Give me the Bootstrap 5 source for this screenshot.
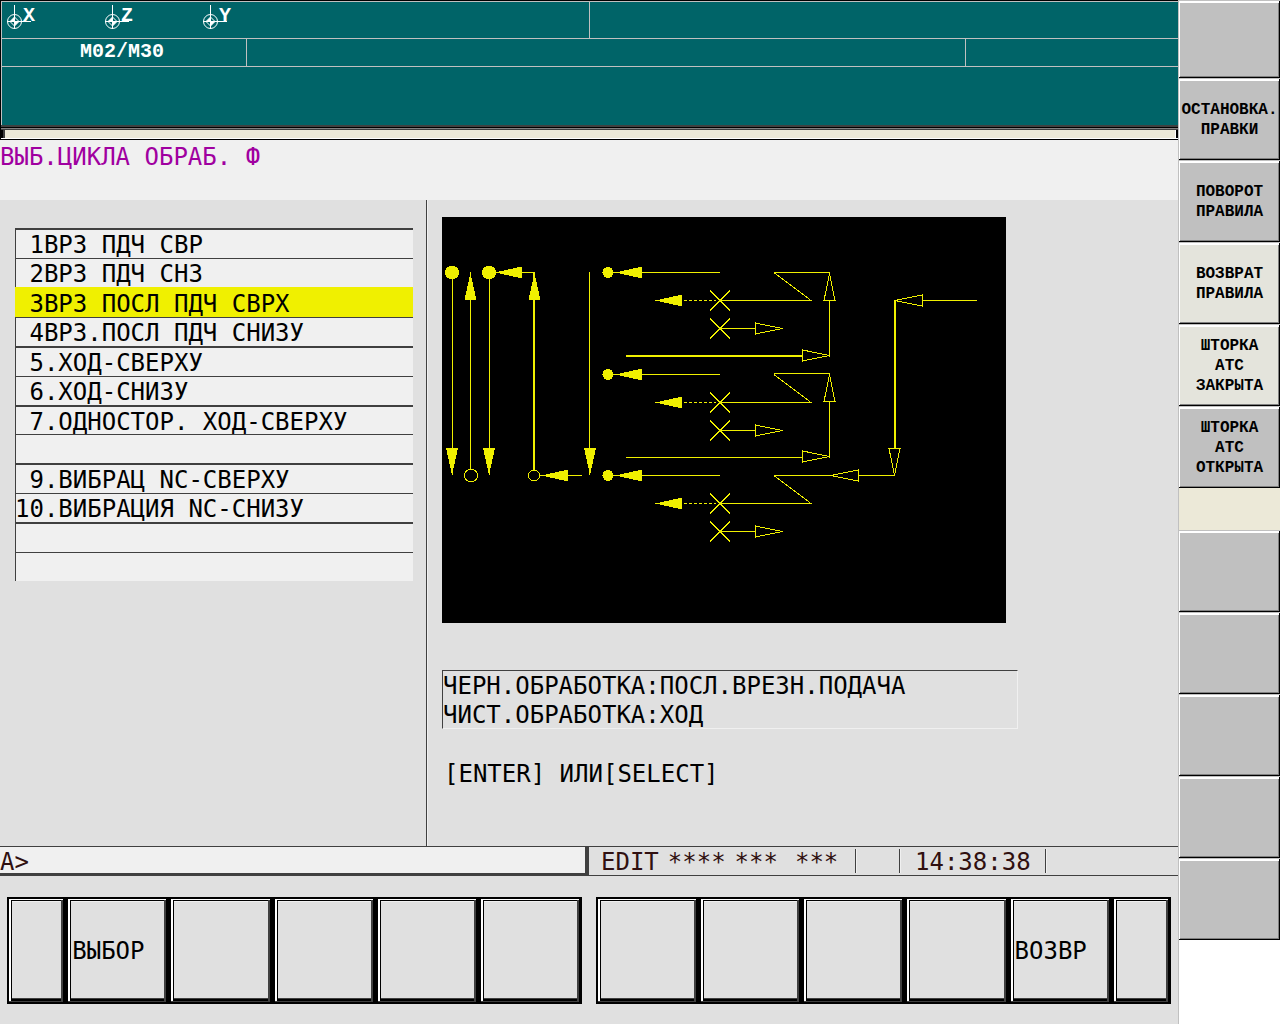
<!DOCTYPE html>
<html lang="ru">
<head>
<meta charset="utf-8">
<meta name="viewport" content="width=device-width, initial-scale=1">
<title>ВЫБ.ЦИКЛА ОБРАБ.</title>
<link href="https://cdn.jsdelivr.net/npm/bootstrap@5.3.0/dist/css/bootstrap.min.css" rel="stylesheet">
<style>
  body { background: #fff; color: #000; font-family: "DejaVu Sans Mono", monospace; font-size: 24px; line-height: 29px; }
  .cnc-main { background: #e0e0e0; min-width: 0; }
  .cnc-text { white-space: pre; }

  /* status header */
  .cnc-head { background: #006468; border-top: 1px solid #000; border-left: 1px solid #000; color: #fff; font-family: "Liberation Mono", monospace; font-weight: 700; font-size: 20px; line-height: 26px; }
  .head-in { border-top: 1px solid #c0c0c0; border-left: 1px solid #c0c0c0; }
  .head-line { border-bottom: 1px solid #c0c0c0; }
  .head-axes { height: 37px; }
  .head-mode { height: 28px; }
  .head-free { height: 58px; }
  .head-sep { border-right: 1px solid #c0c0c0; }
  .axis-group { padding: 3px 0 0 5px; line-height: 22px; }
  .axis-item { width: 98px; }
  .axis-name { margin-left: -8px; }
  .head-bar { height: 15px; background: #ece9d8; border-top: 2px solid #404040; border-bottom: 1px solid #000; padding-left: 1px; box-shadow: inset 0 1px #000, inset 0 2px #808080, inset 0 3px #404040, inset 0 -1px #fff, inset 2px 0 #000, inset 4px 0 #404040, inset -2px 0 #000, inset -3px 0 #fff; }

  .cnc-title { background: #f0f0f0; color: #a000a0; height: 60px; font-size: 24px; line-height: 34px; }

  /* work area */
  .cnc-work { height: 646px; }
  .cycle-col { width: 427px; padding: 28px 13px 0 15px; border-right: 1px solid #404040; box-shadow: 1px 0 #f0f0f0; }
  .cycle-list { height: 353px; }
  .cycle-row { flex: 1 1 0; display: flex; align-items: center; border: 0; border-top: 1px solid #404040; padding: 2px 0 0; background: #f0f0f0; color: #000; white-space: pre; text-align: left; line-height: 26px; box-shadow: inset 1px 0 #404040; min-height: 0; }
  .cycle-row:nth-child(odd) { border-top-width: 2px; }
  .cycle-row.picked { background: #f0f000; border-top-color: #f0f000; box-shadow: none; }
  .view-col { padding: 17px 15px 0 15px; }
  .cycle-view { display: block; background: #000; }
  .note-box { width: 576px; margin-top: 47px; padding-top: 1px; border: 1px solid #f0f0f0; border-top-color: #404040; border-left-color: #404040; height: 59px; }
  .hint-line { margin: 31px 0 0 2px; }

  /* prompt and state line */
  .cnc-state { height: 30px; border-top: 1px solid #404040; border-bottom: 1px solid #404040; color: #301010; line-height: 30px; }
  .prompt-box { width: 589px; background: #f0f0f0; border-right: 4px solid #404040; border-bottom: 2px solid #404040; }
  .prompt-box input { background: transparent; border: 0; outline: 0; color: inherit; font: inherit; min-width: 0; padding: 0; height: 26px; }
  .state-mode { width: 266px; padding-left: 12px; gap: 9px; }
  .state-cell { border-left: 1px solid #404040; box-shadow: inset 1px 0 #f0f0f0; margin: 2px 0; line-height: 26px; }
  .state-gap { width: 44px; }
  .state-time { width: 146px; padding-left: 15px; }

  /* soft keys */
  .cnc-keys { padding: 21px 7px 20px; gap: 14px; }
  .soft-key { flex: 103 1 0; min-width: 0; height: 107px; padding: 2px 0 0 4px; text-align: left; border: 2px solid #000; border-right-width: 3px; background: #e0e0e0; color: #000;
    box-shadow: inset 0 -1px #404040, inset 2px 0 #fff, inset 0 1px #fff, inset -2px 0 #404040, inset 0 -3px #000, inset 3px 0 #000, inset 0 2px #000, inset 0 -4px #404040, inset 0 3px #f0f0f0; }
  .soft-key.edge-key { flex-grow: 55; }

  /* side keys */
  .cnc-side { width: 102px; padding-left: 1px; background: #fff; box-shadow: inset 1px 0 #c0c0c0; }
  .side-key { height: 82px; padding: 0; border: 0; border-top: 1px solid #c0c0c0; background: #c0c0c0; color: #000; font-family: "Liberation Mono", monospace; font-weight: 700; font-size: 16px; line-height: 20px; white-space: pre; display: flex; align-items: center; justify-content: center; text-align: center;
    box-shadow: inset 0 -1px #000, inset -1px 0 #000, inset 1px 1px #fff, inset 0 2px #fff, inset -2px -2px #808080; }
  .side-key.first-key { height: 78px; }
  .side-key.lit { background: #e4e4dc; }
  .side-gap { height: 42px; background: #ece9d8; }
</style>
<script src="https://cdn.jsdelivr.net/npm/bootstrap@5.3.0/dist/js/bootstrap.bundle.min.js"></script>
</head>
<body>
<svg width="0" height="0" class="d-none" aria-hidden="true">
  <symbol id="axis-mark" viewBox="0 0 24 24">
    <g fill="none" stroke="#fff"><circle cx="7.500" cy="16.500" r="7"/><path d="M7.500 0V24M0 16.500H24M7.500 12 12 16.500 7.500 21 3 16.500Z"/></g>
    <path d="M7.500 12V16.500H3ZM7.500 21V16.500H12Z" fill="#fff"/>
  </symbol>
</svg>
<div class="d-flex align-items-stretch min-vh-100">
  <main class="cnc-main flex-grow-1 d-flex flex-column">
    <header class="cnc-head">
      <div class="head-in">
        <div class="head-axes head-line d-flex">
          <div class="head-sep axis-group w-50 d-flex">
            <div class="axis-item d-flex"><svg width="24" height="24" aria-hidden="true"><use href="#axis-mark"/></svg><span class="axis-name">X</span></div>
            <div class="axis-item d-flex"><svg width="24" height="24" aria-hidden="true"><use href="#axis-mark"/></svg><span class="axis-name">Z</span></div>
            <div class="axis-item d-flex"><svg width="24" height="24" aria-hidden="true"><use href="#axis-mark"/></svg><span class="axis-name">Y</span></div>
          </div>
        </div>
        <div class="head-mode head-line d-flex text-center">
          <div class="head-sep pe-1" style="width:245px">M02/M30</div>
          <div class="head-sep flex-grow-1"></div>
          <div style="width:212px"></div>
        </div>
        <div class="head-free"></div>
      </div>
      <div class="head-bar"></div>
    </header>
    <h1 class="cnc-title cnc-text m-0 fw-normal">ВЫБ.ЦИКЛА ОБРАБ. Ф</h1>

    <section class="cnc-work d-flex">
      <div class="cycle-col flex-shrink-0">
        <div class="cycle-list d-flex flex-column">
          <button type="button" class="cycle-row"> 1ВРЗ ПДЧ СВР</button>
          <button type="button" class="cycle-row"> 2ВРЗ ПДЧ СНЗ</button>
          <button type="button" class="cycle-row picked"> 3ВРЗ ПОСЛ ПДЧ СВРХ</button>
          <button type="button" class="cycle-row"> 4ВРЗ.ПОСЛ ПДЧ СНИЗУ</button>
          <button type="button" class="cycle-row"> 5.ХОД-СВЕРХУ</button>
          <button type="button" class="cycle-row"> 6.ХОД-СНИЗУ</button>
          <button type="button" class="cycle-row"> 7.ОДНОСТОР. ХОД-СВЕРХУ</button>
          <button type="button" class="cycle-row" aria-label="8"></button>
          <button type="button" class="cycle-row"> 9.ВИБРАЦ NC-СВЕРХУ</button>
          <button type="button" class="cycle-row">10.ВИБРАЦИЯ NC-СНИЗУ</button>
          <button type="button" class="cycle-row" aria-label="11"></button>
          <button type="button" class="cycle-row" aria-label="12"></button>
        </div>
      </div>
      <div class="view-col flex-grow-1">
        <svg class="cycle-view" width="564" height="406" viewBox="442 217 564 406" fill="none" stroke="#f0f000" shape-rendering="crispEdges" role="img" aria-label="Схема цикла">
          <defs>
            <path id="solid-left" d="M0 0 27-6V6Z" fill="#f0f000" stroke="none"/>
            <path id="open-left" d="M0 0 27-5.500V5.500Z"/>
            <path id="cross" d="M-10-10 10 10M-10 10 10-10"/>
            <g id="pass">
              <circle cx="608" cy="0" r="5.500" fill="#f0f000" stroke="none"/>
              <path d="M608 0H720M720 28H811L774 0M720 55.500H756"/>
              <use href="#solid-left" x="615"/>
              <use href="#solid-left" x="655" y="28"/>
              <path d="M684 28H716" stroke-dasharray="3 2"/>
              <use href="#cross" x="720" y="28"/>
              <use href="#cross" x="720" y="56"/>
              <use href="#open-left" transform="translate(782.500 56) rotate(180)"/>
            </g>
            <g id="lift">
              <path d="M626 84H803M829.500 84V28M829.500 0H774"/>
              <use href="#open-left" transform="translate(829.500 83) rotate(180)"/>
              <use href="#open-left" transform="translate(829.500 1) rotate(90)"/>
            </g>
          </defs>
          <path d="M452.500 272V475M470.500 272V470M489.500 272V475M589.500 272V475M489 272.500H534M540 475.500H582"/>
          <path d="M534 272V470" stroke-width="2"/>
          <circle cx="452" cy="272.500" r="7" fill="#f0f000" stroke="none"/>
          <circle cx="489" cy="272.500" r="7" fill="#f0f000" stroke="none"/>
          <circle cx="471" cy="475.500" r="6.500"/>
          <circle cx="534" cy="475.500" r="5.500"/>
          <use href="#solid-left" x="495" y="272.500"/>
          <use href="#solid-left" x="541" y="475.500"/>
          <use href="#solid-left" transform="translate(470.500 273) rotate(90)"/>
          <use href="#solid-left" transform="translate(534.500 273) rotate(90)"/>
          <use href="#solid-left" transform="translate(452 475) rotate(-90)"/>
          <use href="#solid-left" transform="translate(489 475) rotate(-90)"/>
          <use href="#solid-left" transform="translate(590 475) rotate(-90)"/>
          <use href="#pass" y="272.500"/>
          <use href="#pass" y="374.500"/>
          <use href="#pass" y="475.500"/>
          <use href="#lift" y="272.500"/>
          <use href="#lift" y="373.500"/>
          <path d="M626 356H803M895 300V449" stroke-width="2"/>
          <path d="M922 300.500H977M774 475.500H832M858 475.500H895"/>
          <use href="#open-left" x="895" y="300.500"/>
          <use href="#open-left" x="831" y="475.500"/>
          <use href="#open-left" transform="translate(894.500 475.500) rotate(-90)"/>
        </svg>
        <div class="note-box cnc-text">ЧЕРН.ОБРАБОТКА:ПОСЛ.ВРЕЗН.ПОДАЧА
ЧИСТ.ОБРАБОТКА:ХОД</div>
        <div class="hint-line cnc-text">[ENTER] ИЛИ[SELECT]</div>
      </div>
    </section>

    <section class="cnc-state d-flex">
      <div class="prompt-box d-flex flex-shrink-0">
        <label for="prompt">A&gt;</label>
        <input id="prompt" type="text" class="flex-grow-1" autocomplete="off">
      </div>
      <div class="state-mode d-flex"><span>EDIT</span><span>****</span><span>***</span><span class="ms-2">***</span></div>
      <div class="state-cell state-gap"></div>
      <div class="state-cell state-time">14:38:38</div>
      <div class="state-cell flex-grow-1"></div>
    </section>

    <nav class="cnc-keys d-flex">
      <div class="d-flex flex-grow-1 w-50">
        <button type="button" class="soft-key edge-key" aria-label="◄"></button>
        <button type="button" class="soft-key">ВЫБОР</button>
        <button type="button" class="soft-key" aria-label="F2"></button>
        <button type="button" class="soft-key" aria-label="F3"></button>
        <button type="button" class="soft-key" aria-label="F4"></button>
        <button type="button" class="soft-key" aria-label="F5"></button>
      </div>
      <div class="d-flex flex-grow-1 w-50">
        <button type="button" class="soft-key" aria-label="F6"></button>
        <button type="button" class="soft-key" aria-label="F7"></button>
        <button type="button" class="soft-key" aria-label="F8"></button>
        <button type="button" class="soft-key" aria-label="F9"></button>
        <button type="button" class="soft-key">ВОЗВР</button>
        <button type="button" class="soft-key edge-key" aria-label="►"></button>
      </div>
    </nav>
  </main>

  <aside class="cnc-side flex-shrink-0 d-flex flex-column">
    <button type="button" class="side-key first-key" aria-label="1"></button>
    <button type="button" class="side-key">ОСТАНОВКА.
ПРАВКИ</button>
    <button type="button" class="side-key">ПОВОРОТ
ПРАВИЛА</button>
    <button type="button" class="side-key lit">ВОЗВРАТ
ПРАВИЛА</button>
    <button type="button" class="side-key lit">ШТОРКА
АТС
ЗАКРЫТА</button>
    <button type="button" class="side-key">ШТОРКА
АТС
ОТКРЫТА</button>
    <div class="side-gap"></div>
    <button type="button" class="side-key" aria-label="7"></button>
    <button type="button" class="side-key" aria-label="8"></button>
    <button type="button" class="side-key" aria-label="9"></button>
    <button type="button" class="side-key" aria-label="10"></button>
    <button type="button" class="side-key" aria-label="11"></button>
  </aside>
</div>
</body>
</html>
